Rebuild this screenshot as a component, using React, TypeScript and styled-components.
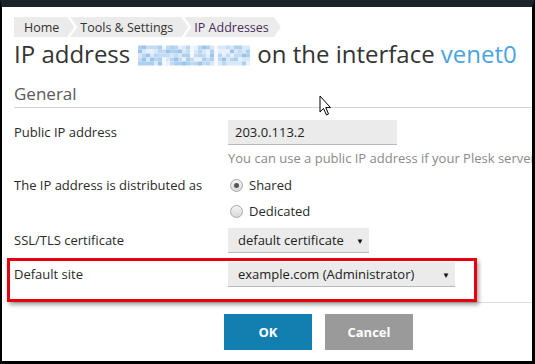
import React from 'react';
import styled, { createGlobalStyle } from 'styled-components';

const Global = createGlobalStyle`
  html, body { margin: 0; padding: 0; background: #000; }
  body { font-family: "Open Sans", "Liberation Sans", sans-serif; }
  * { box-sizing: border-box; }
`;

const Window = styled.div`
  width: 535px;
  height: 364px;
  border-top: 7px solid #1c232b;
  border-left: 2px solid #000;
  border-right: 3px solid #000;
  border-bottom: 3px solid #000;
  background: #fff;
  position: relative;
  overflow: hidden;
`;

const Content = styled.div`
  padding: 10px 0 0 12px;
  white-space: nowrap;
`;

const Crumbs = styled.nav`
  display: flex;
  height: 20px;
`;

const Crumb = styled.span<{ $first?: boolean; $active?: boolean }>`
  display: flex;
  align-items: center;
  height: 20px;
  background: #ebebeb;
  font-size: 12.5px;
  color: ${(p) => (p.$active ? '#4a2d5c' : '#333')};
  padding: 0 ${(p) => (p.$active ? '12px' : '15px')} 0 ${(p) => (p.$first ? '10px' : '10px')};
  margin-left: ${(p) => (p.$first ? '0' : '-4px')};
  clip-path: ${(p) =>
    p.$first
      ? 'polygon(0 0, calc(100% - 7px) 0, 100% 50%, calc(100% - 7px) 100%, 0 100%)'
      : 'polygon(0 0, calc(100% - 7px) 0, 100% 50%, calc(100% - 7px) 100%, 0 100%, 7px 50%)'};
`;

const Title = styled.h1`
  margin: 2px 0 0;
  font-size: 24px;
  font-weight: 400;
  line-height: 30px;
  color: #333;
`;

const Iface = styled.span`
  color: #4ba3e0;
`;

const BlurBox = styled.span`
  display: inline-block;
  vertical-align: -3px;
  width: 112px;
  height: 21px;
  margin: 0 7px 0 8px;
`;

const SectionTitle = styled.h2`
  margin: 14px 0 0;
  font-size: 17px;
  font-weight: 400;
  line-height: 22px;
  color: #5a5a5a;
  padding-bottom: 2px;
  border-bottom: 1px solid #d6d6d6;
`;

const Form = styled.div`
  display: grid;
  grid-template-columns: 214px 1fr;
  margin-top: 12px;
`;

const Label = styled.div<{ $h: number; $mt?: number }>`
  grid-column: 1;
  font-size: 13px;
  color: #2a2a2a;
  line-height: ${(p) => p.$h}px;
  margin-top: ${(p) => p.$mt ?? 0}px;
`;

const Field = styled.div<{ $mt?: number }>`
  grid-column: 2;
  margin-top: ${(p) => p.$mt ?? 0}px;
  position: relative;
`;

const Input = styled.div`
  width: 169px;
  height: 25px;
  line-height: 25px;
  background: #ebebeb;
  border-bottom: 1px solid #b9b9b9;
  padding-left: 7px;
  font-size: 13px;
  color: #222;
`;

const Hint = styled.div`
  font-size: 13px;
  line-height: 18px;
  color: #8a8a8a;
  margin-top: 4px;
`;

const RadioRow = styled.label`
  display: flex;
  align-items: center;
  height: 26px;
  font-size: 13px;
  color: #2a2a2a;
  gap: 6px;
  padding-left: 2px;
`;

const RadioDot = styled.span<{ $on?: boolean }>`
  width: 13px;
  height: 13px;
  border-radius: 50%;
  border: 1px solid #a8a8a8;
  background: linear-gradient(#f4f4f4, #d9d9d9);
  display: flex;
  align-items: center;
  justify-content: center;
  &::after {
    content: '';
    width: 5px;
    height: 5px;
    border-radius: 50%;
    background: ${(p) => (p.$on ? '#555' : 'transparent')};
  }
`;

const Select = styled.div<{ $w: number }>`
  width: ${(p) => p.$w}px;
  height: 25px;
  display: flex;
  align-items: center;
  background: #ebebeb;
  border-bottom: 1px solid #b9b9b9;
  padding: 0 6px 0 10px;
  font-size: 13px;
  color: #222;
`;

const Caret = styled.span`
  margin-left: auto;
  font-size: 8px;
  color: #111;
  width: 7px;
  text-align: center;
`;

const Highlight = styled.div`
  position: absolute;
  left: -7px;
  top: -4px;
  width: 470px;
  height: 44px;
  border: 3px solid #e4000f;
  box-shadow: 2px 3px 4px rgba(0, 0, 0, 0.35);
  pointer-events: none;
`;

const RowWrap = styled.div`
  grid-column: 1 / 3;
  display: grid;
  grid-template-columns: 214px 1fr;
  position: relative;
  margin-top: 9px;
`;

const Footer = styled.div`
  margin-top: 15px;
  border-top: 1px solid #dcdcdc;
  padding: 11px 0 0 210px;
  display: flex;
  gap: 13px;
`;

const Button = styled.button<{ $primary?: boolean }>`
  width: 88px;
  height: 36px;
  border: none;
  font-family: inherit;
  font-size: 13px;
  font-weight: 700;
  color: #fff;
  background: ${(p) => (p.$primary ? '#127fb0' : '#9a9a9a')};
`;

const Cursor = styled.svg`
  position: absolute;
  left: 317px;
  top: 88px;
`;

const seedCells = () => {
  const cells: { x: number; y: number; c: string }[] = [];
  const palette = ['#d9e8f7', '#c4dcf3', '#aed0f0', '#9ac4ec', '#e8f1fb', '#b8d6f2'];
  let s = 7;
  for (let x = 0; x < 28; x++) {
    for (let y = 0; y < 5; y++) {
      s = (s * 9301 + 49297) % 233280;
      const r = s / 233280;
      const gap = x === 6 || x === 13 || x === 19;
      const c = gap && r > 0.4 ? '#f4f8fd' : palette[Math.floor(r * palette.length)];
      cells.push({ x, y, c });
    }
  }
  return cells;
};

const cells = seedCells();

const Blur = () => (
  <BlurBox>
    <svg width="112" height="21" viewBox="0 0 112 21">
      {cells.map((k, i) => (
        <rect key={i} x={k.x * 4} y={k.y * 4 + 0.5} width="4" height="4" fill={k.c} />
      ))}
    </svg>
  </BlurBox>
);

export default function App() {
  return (
    <>
      <Global />
      <Window>
        <Content>
          <Crumbs>
            <Crumb $first>Home</Crumb>
            <Crumb>Tools &amp; Settings</Crumb>
            <Crumb $active>IP Addresses</Crumb>
          </Crumbs>
          <Title>
            IP address
            <Blur />
            on the interface <Iface>venet0</Iface>
          </Title>
          <SectionTitle>General</SectionTitle>
          <Form>
            <Label $h={25}>Public IP address</Label>
            <Field>
              <Input>203.0.113.2</Input>
              <Hint>You can use a public IP address if your Plesk server is behind NAT.</Hint>
            </Field>
            <Label $h={26} $mt={5}>The IP address is distributed as</Label>
            <Field $mt={5}>
              <RadioRow>
                <RadioDot $on />
                Shared
              </RadioRow>
              <RadioRow>
                <RadioDot />
                Dedicated
              </RadioRow>
            </Field>
            <Label $h={25} $mt={4}>SSL/TLS certificate</Label>
            <Field $mt={4}>
              <Select $w={141}>
                default certificate
                <Caret>▼</Caret>
              </Select>
            </Field>
            <RowWrap>
              <Label $h={25}>Default site</Label>
              <Field>
                <Select $w={227}>
                  example.com (Administrator)
                  <Caret>▼</Caret>
                </Select>
              </Field>
              <Highlight />
            </RowWrap>
          </Form>
          <Footer>
            <Button $primary>OK</Button>
            <Button>Cancel</Button>
          </Footer>
        </Content>
        <Cursor width="13" height="22" viewBox="0 0 13 22">
          <path
            d="M1 1 L1 17 L4.5 13.5 L7.5 20 L9.5 19 L6.8 12.6 L11.5 12.6 Z"
            fill="#fff"
            stroke="#000"
            strokeWidth="1"
            strokeLinejoin="miter"
          />
        </Cursor>
      </Window>
    </>
  );
}
